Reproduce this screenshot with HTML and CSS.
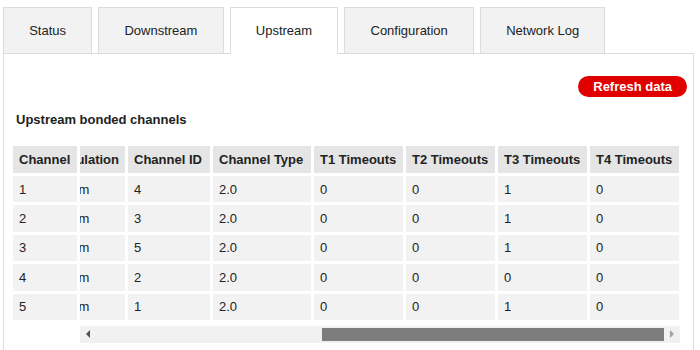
FILE: index.html
```html
<!DOCTYPE html>
<html lang="en">

<head>
    <meta charset="UTF-8">
    <meta name="viewport" content="width=device-width, initial-scale=1.0">
    <title>Upstream</title>
    <link rel="stylesheet" href="styles.css">
</head>

<body>
    <div class="page">
        <div class="tabs">
            <div class="tab">Status</div>
            <div class="tab">Downstream</div>
            <div class="tab active">Upstream</div>
            <div class="tab">Configuration</div>
            <div class="tab">Network Log</div>
        </div>

        <div class="panel">
            <div class="toolbar">
                <button class="refresh">Refresh data</button>
            </div>
            <h2>Upstream bonded channels</h2>

            <div class="channels">
                <table class="fixed-col">
                    <tr><th>Channel</th></tr>
                    <tr><td>1</td></tr>
                    <tr><td>2</td></tr>
                    <tr><td>3</td></tr>
                    <tr><td>4</td></tr>
                    <tr><td>5</td></tr>
                </table>

                <div class="scroller">
                    <!-- scrolled all the way right -->
                    <div class="scroll-view">
                        <table class="data">
                            <tr>
                                <th>Modulation</th>
                                <th class="col-id">Channel ID</th>
                                <th class="col-type">Channel Type</th>
                                <th class="col-t">T1 Timeouts</th>
                                <th class="col-t">T2 Timeouts</th>
                                <th class="col-t">T3 Timeouts</th>
                                <th class="col-t">T4 Timeouts</th>
                            </tr>
                            <tr><td>64qam</td><td>4</td><td>2.0</td><td>0</td><td>0</td><td>1</td><td>0</td></tr>
                            <tr><td>64qam</td><td>3</td><td>2.0</td><td>0</td><td>0</td><td>1</td><td>0</td></tr>
                            <tr><td>64qam</td><td>5</td><td>2.0</td><td>0</td><td>0</td><td>1</td><td>0</td></tr>
                            <tr><td>64qam</td><td>2</td><td>2.0</td><td>0</td><td>0</td><td>0</td><td>0</td></tr>
                            <tr><td>64qam</td><td>1</td><td>2.0</td><td>0</td><td>0</td><td>1</td><td>0</td></tr>
                        </table>
                    </div>

                    <div class="scrollbar">
                        <span class="arrow left"></span>
                        <span class="spacer"></span>
                        <span class="thumb"></span>
                        <span class="arrow right"></span>
                    </div>
                </div>
            </div>
        </div>
    </div>
</body>

</html>
```

FILE: styles.css
```css
body {
    margin: 0;
    font-family: 'Liberation Sans', Arial, sans-serif;
    font-size: 13px;
    color: #222;
    background-color: white;
}

.page {
    padding: 7px 0 0 3px;
    width: 691px;
}

.tabs {
    display: flex;
    gap: 6px;
}

.tab {
    height: 45px;
    line-height: 45px;
    padding: 0 25.2px;
    background-color: #f2f2f2;
    border: 1px solid #dcdcdc;
    border-bottom: none;
    color: #222;
}

.tab.active {
    background-color: white;
    height: 46px;
    margin-bottom: -1px;
    position: relative;
}

.panel {
    border: 1px solid #dcdcdc;
    border-bottom: none;
    height: 300px;
    padding: 0 6px;
}

.toolbar {
    display: flex;
    justify-content: flex-end;
    padding-top: 22px;
}

.refresh {
    background-color: #e00000;
    color: white;
    border: none;
    border-radius: 11px;
    height: 21px;
    padding: 0 15px;
    font-family: inherit;
    font-size: 13px;
    font-weight: bold;
    cursor: pointer;
}

h2 {
    font-size: 13px;
    font-weight: bold;
    margin: 15px 0 0;
    padding-left: 6px;
    line-height: 15px;
}

.channels {
    display: flex;
    align-items: flex-start;
    margin-top: 16px;
}

table {
    border-spacing: 3px;
    white-space: nowrap;
}

th,
td {
    padding: 0 6px;
    text-align: left;
}

th {
    height: 27px;
    background-color: #e5e5e5;
    font-weight: bold;
}

td {
    height: 26.4px;
    background-color: #f2f2f2;
}

.fixed-col {
    flex: none;
}

.fixed-col th {
    width: 52px;
}

.col-id {
    width: 70px;
}

.col-type {
    width: 86px;
}

.col-t {
    width: 77px;
}

.scroller {
    width: 600px;
}

.scroll-view {
    display: flex;
    justify-content: flex-end;
    overflow: hidden;
}

.data {
    flex: none;
    margin-right: -2px;
}

.scrollbar {
    display: flex;
    align-items: center;
    height: 17px;
    margin-top: 3px;
    background-color: #f1f1f1;
}

.spacer {
    flex: 1;
}

.thumb {
    width: 342px;
    height: 13px;
    background-color: #7d7d7d;
}

.arrow {
    width: 16px;
    height: 17px;
    display: flex;
    align-items: center;
    justify-content: center;
}

.arrow::before {
    content: "";
    border-top: 4px solid transparent;
    border-bottom: 4px solid transparent;
}

.arrow.left::before {
    border-right: 4px solid #505050;
}

.arrow.right::before {
    border-left: 4px solid #a3a3a3;
}
```
